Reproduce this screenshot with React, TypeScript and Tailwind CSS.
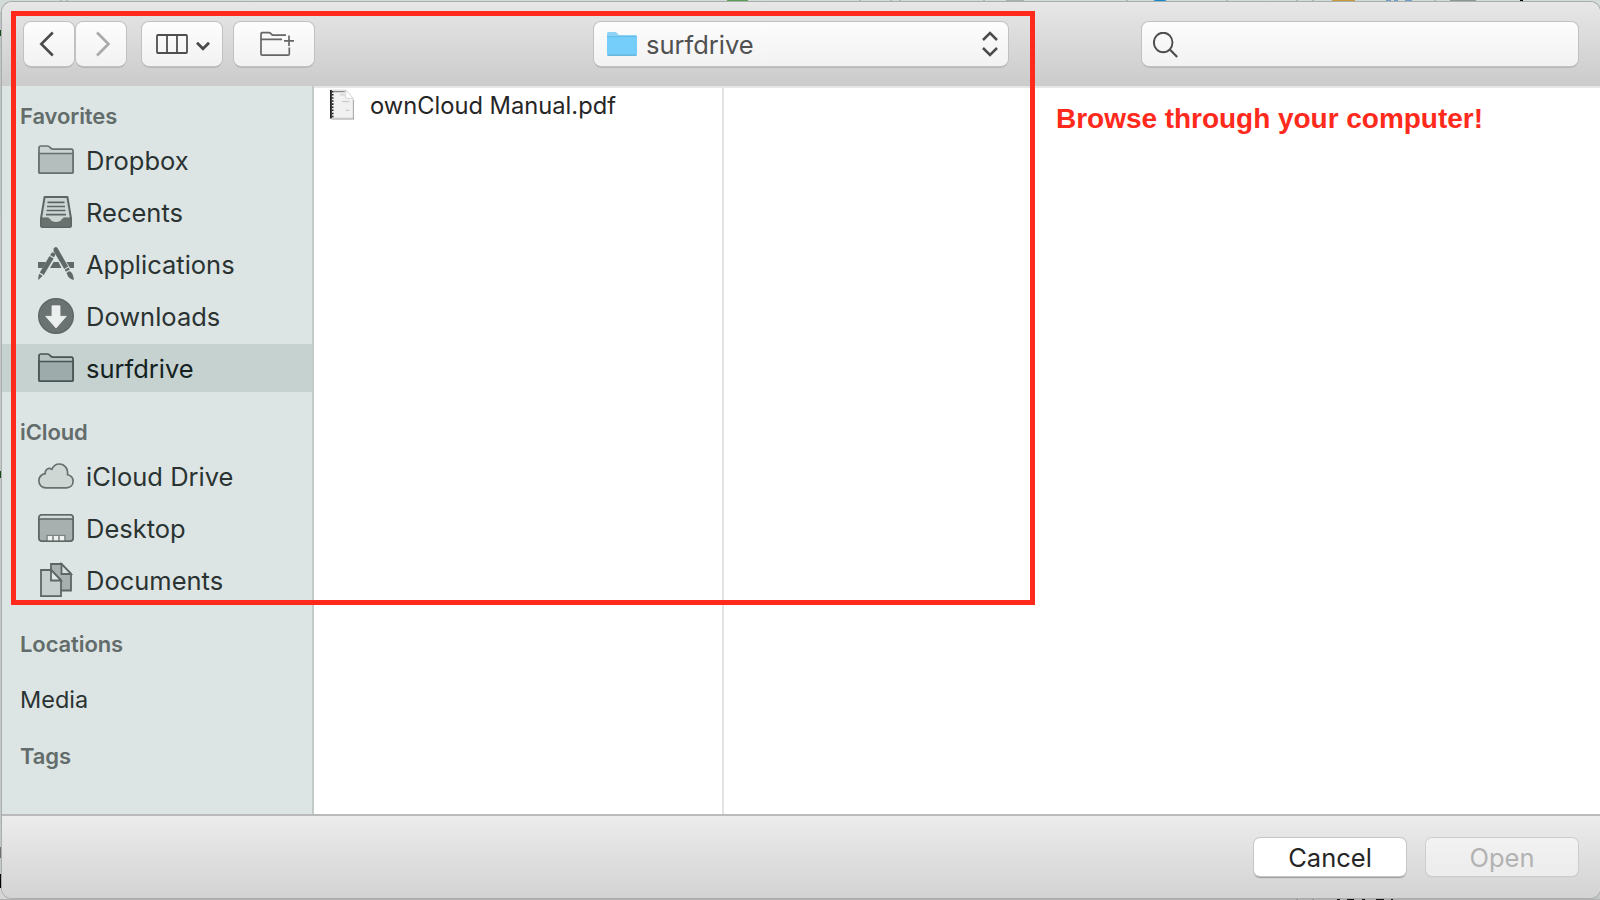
import type { ReactNode } from "react";

const INK = "#5c6664";

function Folder({ active = false }: { active?: boolean }) {
  const s = active ? "#475451" : "#66706e";
  return (
    <svg width="36" height="30" viewBox="0 0 36 30" fill="none" stroke={s} strokeWidth="1.7">
      <path d="M1 27V3Q1 1 3 1H9.5Q11 1 11.8 2.3Q13 4.2 15 4.2H33.5Q35 4.2 35 6V27Q35 28.2 33.7 28.2H2.3Q1 28.2 1 27Z" fill={active ? "#b5c2bf" : "#cbd4d2"} />
      <path d="M1 8.5H35V27Q35 28.2 33.7 28.2H2.3Q1 28.2 1 27Z" fill={active ? "#9dacaa" : "#b3bebd"} />
    </svg>
  );
}

function Recents() {
  return (
    <svg width="36" height="36" viewBox="0 0 36 36" fill="none">
      <path d="M6.6 3H29.4L33 24.5V31.5Q33 33 31.5 33H4.5Q3 33 3 31.5V24.5Z" fill="#cdd5d3" stroke={INK} strokeWidth="2" strokeLinejoin="round" />
      <path d="M9.5 8.3H26.5M9 12.5H27M8.6 16.5H27.4M8 20.7H28" stroke={INK} strokeWidth="1.7" />
      <path d="M3 24H10C12 24 12 28.5 18 28.5S24 24 26 24H33V31.5Q33 33 31.5 33H4.5Q3 33 3 31.5Z" fill="#69726f" stroke={INK} />
    </svg>
  );
}

function Applications() {
  return (
    <svg width="36" height="36" viewBox="0 0 36 36" fill="#5f6967">
      <path d="M0 16H8L4.5 22H0ZM15.5 16H20.5L23.5 22H12ZM28.5 16H36V22H32Z" />
      <path d="M15.6 2.6Q17.5-.4 19.7 2.3L30.2 20.6L26.2 22.9L15.6 5.2Z" />
      <path d="M26.7 23.7L30.6 21.5L31.8 23.6L27.9 25.8Z" />
      <path d="M28.6 27Q31 24 33.2 26.2Q35.8 29 35.7 34.2Q30 32.5 28.6 27Z" />
      <path d="M14.7 6.3L17 7.5Q17.5 9 16 11.3L12.2 9.2Q13 7 14.7 6.3Z" />
      <path d="M11.5 10.1L15.6 12.4L5.8 28.9L1.8 26.6Z" />
      <path d="M1.3 27.8L4.6 29.8L0.4 34Q-.2 31 1.3 27.8Z" />
    </svg>
  );
}

function Downloads() {
  return (
    <svg width="36" height="36" viewBox="0 0 36 36">
      <circle cx="18" cy="18" r="17.3" fill="#6a7371" stroke={INK} strokeWidth="1.4" />
      <path d="M14 7.8H22V18.3H28.3L18 30L7.7 18.3H14Z" fill="#ebf0ef" stroke="#ebf0ef" strokeWidth=".8" strokeLinejoin="round" />
    </svg>
  );
}

function Cloud() {
  return (
    <svg width="36" height="26" viewBox="0 0 36 26">
      <path d="M8 24.8H28.5C32.5 24.8 35.1 22 35.1 18.3C35.1 14.7 32.8 12.6 29.6 11.8C30.2 5.5 26.5 1 21.5 1C17.8 1 15.2 3 13.9 6.2C10.5 4.2 6.9 6.5 7.2 10.6C3.3 11.4 .9 14.2 .9 17.8C.9 22 3.8 24.8 8 24.8Z" fill="#cfd7d5" stroke="#66706e" strokeWidth="1.7" />
    </svg>
  );
}

function Desktop() {
  return (
    <svg width="36" height="28" viewBox="0 0 36 28">
      <rect x=".9" y=".9" width="34.2" height="26.2" rx="2.8" fill="#a7b0ae" stroke={INK} strokeWidth="1.8" />
      <path d="M1.8 4.5V3.6Q1.8 1.8 3.6 1.8H32.4Q34.2 1.8 34.2 3.6V4.5Z" fill="#d3dad8" />
      <path d="M1 5H35" stroke={INK} strokeWidth="1.4" />
      <path d="M8.3 20.8H27.7V26.2H8.3Z" fill="#7b8583" />
      <path d="M9.8 22H14.2V26.2H9.8ZM15.8 22H20.2V26.2H15.8ZM21.8 22H26.2V26.2H21.8Z" fill="#edf1f0" />
    </svg>
  );
}

function Documents() {
  return (
    <svg width="36" height="36" viewBox="0 0 36 36" stroke={INK} strokeWidth="1.8">
      <path d="M13 2H23.5L33 11.5V28.5H13Z" fill="#a7b0ae" />
      <path d="M23.5 2V12H33Z" fill="#d9e0de" />
      <path d="M3 8H13L23 18V34.2H3Z" fill="#c6cfcd" />
      <path d="M13 8V18.5H23Z" fill="#e2e8e6" />
    </svg>
  );
}

function Row({ icon, label, active = false }: { icon: ReactNode; label: string; active?: boolean }) {
  return (
    <li className={active ? "flex h-12 items-center bg-[#c5d2d0] pl-9 text-[#14211f]" : "flex h-12 items-center pl-9 text-[#2a3332]"}>
      <span className="flex w-9 shrink-0 items-center justify-center">{icon}</span>
      <span className="ml-3 pt-[2px] text-[25.5px] leading-8">{label}</span>
    </li>
  );
}

function Heading({ children }: { children: ReactNode }) {
  return <h2 className="flex h-12 items-center pt-2 pl-[18px] text-[22px] leading-7 font-semibold tracking-[-0.1px] text-[#626c6a]">{children}</h2>;
}

const control = "flex h-[44px] items-center rounded-[7px] bg-linear-to-b from-[#fdfdfd] to-[#f2f2f2] shadow-[0_0_0_1px_#c1c1c1,0_1.5px_0_0_#9d9d9d]";

function Toolbar() {
  return (
    <header className="flex h-[84px] shrink-0 items-start bg-linear-to-b from-[#e7e7e7] to-[#cbcbcb] pt-5 pl-[22px]">
      <button className={`${control} w-[50px] justify-center`}>
        <svg width="16" height="26" viewBox="0 0 16 26" fill="none" stroke="#4b4b4b" strokeWidth="2.6" className="-ml-1"><path d="M13.8 1.5L2.3 13L13.8 24.5" /></svg>
      </button>
      <button className={`${control} ml-[2px] w-[50px] justify-center`}>
        <svg width="16" height="26" viewBox="0 0 16 26" fill="none" stroke="#a9a9a9" strokeWidth="2.6" className="ml-1"><path d="M2 1.5L13.5 13L2 24.5" /></svg>
      </button>
      <button className={`${control} ml-4 w-20 pl-3.5`}>
        <svg width="32" height="20" viewBox="0 0 32 20" fill="none" stroke="#4e4e4e" strokeWidth="1.8"><rect x="1" y="1" width="30" height="18" rx="1" /><path d="M11 1V19M21 1V19" /></svg>
        <svg width="14" height="10" viewBox="0 0 14 10" fill="none" stroke="#4b4b4b" strokeWidth="2.8" className="mt-[3px] ml-2"><path d="M1 1.8L7 7.8L13 1.8" /></svg>
      </button>
      <button className={`${control} ml-3 w-20 pl-[26px]`}>
        <svg width="34" height="26" viewBox="0 0 34 26" fill="none" stroke="#666" strokeWidth="1.7">
          <path d="M26 4.2H13.5Q12 4.2 11 2.7Q10 1.6 9 1.6H2.2Q1 1.6 1 3V23Q1 24.2 2.2 24.2H28Q29.3 24.2 29.3 23V16.5M1.5 8.3H22" />
          <path d="M29 4.6V15M24 9.8H34" />
        </svg>
      </button>
      <div className={`${control} ml-[280px] w-[414px] pr-[10px] pl-[13px]`}>
        <svg width="30" height="26" viewBox="0 0 30 26">
          <path d="M0 24V2.5Q0 1 1.5 1H8Q9.5 1 10.5 2.6Q11 4 12.5 4H28.5Q30 4 30 5.5V24Z" fill="#8ed3f5" />
          <path d="M0 5.6H30V23Q30 24.5 28.5 24.5H1.5Q0 24.5 0 23Z" fill="#74cef9" />
          <path d="M0 5.6H30" stroke="#5bb8e6" strokeWidth=".8" />
          <path d="M.5 24.2H29.5" stroke="#4aa4d1" strokeWidth="1" />
        </svg>
        <span className="ml-[9px] pt-px text-[25.5px] leading-8 text-[#505050]">surfdrive</span>
        <svg width="16" height="26" viewBox="0 0 16 26" fill="none" stroke="#4b4b4b" strokeWidth="2.5" className="ml-auto"><path d="M1 9L8 2L15 9M1 17L8 24L15 17" /></svg>
      </div>
      <div className={`${control} ml-[134px] w-[436px] pl-[11px]`}>
        <svg width="25" height="26" viewBox="0 0 25 26" fill="none" stroke="#4d4d4d" strokeWidth="1.9" className="mt-[2px]"><ellipse cx="10.2" cy="10.5" rx="9.3" ry="9.8" /><path d="M16.8 17.5L24.2 25" strokeWidth="2.2" /></svg>
      </div>
    </header>
  );
}

/* Slivers of the document window that shows around the dialog's edges. */
function WindowBehind() {
  return (
    <svg className="absolute top-0 left-0" width="1600" height="900" viewBox="0 0 1600 900">
      <path d="M0 0H1600V12H0Z" fill="#d3dbd8" />
      <path d="M727 0H748V2H727Z" fill="#5aa052" />
      <path d="M1006 0H1024V2H1006Z" fill="#a8b0b2" />
      <path d="M1153 0H1167Q1160 4 1153 0Z" fill="#1688d0" />
      <path d="M1332 0H1355V2H1332Z" fill="#c79b3a" />
      <path d="M1386 0H1391V2H1386ZM1394 0H1398V2H1394ZM1405 0H1412V2H1405Z" fill="#6c9cc9" />
      <path d="M860 0V2M891 0V2M900 0V2M984 0V2M1127 0V2M1227 0V2M1297 0V2M1313 0V2M1435 0V2M1450 .5H1476M1451 0V2M1459 0V2M1467 0V2M1475 0V2M61 0V2M67 0V2" stroke="#8d9694" />
      <path d="M1520 0H1523V2H1520Z" fill="#000" />
      <path d="M0 12H2V216H0Z" fill="#bfc4c4" />
      <path d="M0 30H1.5V36H0ZM0 471H1.5V478H0Z" fill="#174d1b" />
      <path d="M0 847H2V858H0Z" fill="#6f6f6f" />
      <path d="M0 874H2V888H0Z" fill="#000" />
      <path d="M0 888H14V900H0Z" fill="#d5d5d5" />
      <path d="M0 899H1600V900H0Z" fill="#b0b0b0" />
      <path d="M1297 898V900M1313 898V900" stroke="#777" />
      <path d="M1337 899H1340M1347 899H1354M1362 899H1365M1376 899H1384M1391 899H1393" stroke="#111" strokeWidth="2" />
    </svg>
  );
}

export default function App() {
  return (
    <div className="relative h-[900px] w-[1600px] overflow-hidden bg-[#c4c8c7] pt-[2px] pl-[2px] font-['Inter',sans-serif]">
      <WindowBehind />
      <div className="relative flex h-[896px] w-[1598px] flex-col overflow-hidden rounded-[10px] bg-white shadow-[0_0_0_1px_#a9adac]">
        <Toolbar />
        <div className="flex h-[728px] shrink-0">
          <nav className="h-full w-[312px] shrink-0 border-r-2 border-[#c3cbca] bg-[#dde5e4] pt-[2px]">
            <Heading>Favorites</Heading>
            <ul className="flex flex-col gap-1">
              <Row icon={<Folder />} label="Dropbox" />
              <Row icon={<Recents />} label="Recents" />
              <Row icon={<Applications />} label="Applications" />
              <Row icon={<Downloads />} label="Downloads" />
              <Row icon={<Folder active />} label="surfdrive" active />
            </ul>
            <div className="h-3" />
            <Heading>iCloud</Heading>
            <ul className="flex flex-col gap-1">
              <Row icon={<Cloud />} label="iCloud Drive" />
              <Row icon={<Desktop />} label="Desktop" />
              <Row icon={<Documents />} label="Documents" />
            </ul>
            <div className="h-3" />
            <Heading>Locations</Heading>
            <div className="flex h-16 items-center pt-2 pl-[18px] text-[23.5px] text-[#2a3332]">Media</div>
            <Heading>Tags</Heading>
          </nav>
          <main className="flex grow border-t-2 border-[#e6e6e6]">
            <section className="w-[410px] shrink-0 border-r-2 border-[#e3e3e3]">
              <div className="flex h-9 items-center pl-4">
                <svg width="24" height="31" viewBox="0 0 26 32" preserveAspectRatio="none" className="mb-[4px]">
                  <path d="M2 31H25.5V11" fill="none" stroke="#9b9b9b" strokeWidth="1.2" />
                  <path d="M1.5 1H17L25 10V30H1.5Z" fill="#f1f1f1" stroke="#c9c9c9" strokeWidth=".7" />
                  <path d="M17 1V9.5H25Z" fill="#fff" stroke="#c0c0c0" strokeWidth=".6" />
                  <path d="M4 2.7H16" stroke="#8a8a8a" strokeWidth="1.5" />
                  <path d="M11 6H16M13 13H21M17 22H21" stroke="#b5b5b5" strokeWidth=".8" />
                  <path d="M1 1V30.5" stroke="#222" strokeWidth="2" />
                  <path d="M3 2V30" stroke="#222" strokeWidth="1.6" strokeDasharray="1.6 1.6" />
                </svg>
                <span className="ml-4 text-[23.7px] leading-8 text-[#262626]">ownCloud Manual.pdf</span>
              </div>
            </section>
            <section className="grow pt-[13px] pl-[332px] font-['Liberation_Sans',sans-serif] text-[28px] leading-9 font-bold tracking-[-0.03px] text-[#ff2a1c]">Browse through your computer!</section>
          </main>
        </div>
        <footer className="flex grow items-start justify-end gap-5 border-t-2 border-[#bababa] bg-linear-to-b from-[#ececec] to-[#d3d3d3] pt-[22px] pr-[22px]">
          <button className="h-[38px] w-[152px] rounded-[6px] bg-white text-[25.5px] leading-[40px] text-[#262626] shadow-[0_0_0_1px_#c6c6c6,0_1.5px_1px_0_#999]">Cancel</button>
          <button className="h-[38px] w-[152px] rounded-[6px] bg-linear-to-b from-[#f2f2f2] to-[#ececec] text-[25.5px] leading-[40px] text-[#b2b2b2] shadow-[0_0_0_1px_#cdcdcd,0_1px_1px_0_#bbb]">Open</button>
        </footer>
      </div>
      <div className="pointer-events-none absolute top-[11px] left-[11px] h-[594px] w-[1024px] border-[5px] border-[#ff2a1c]" />
    </div>
  );
}
